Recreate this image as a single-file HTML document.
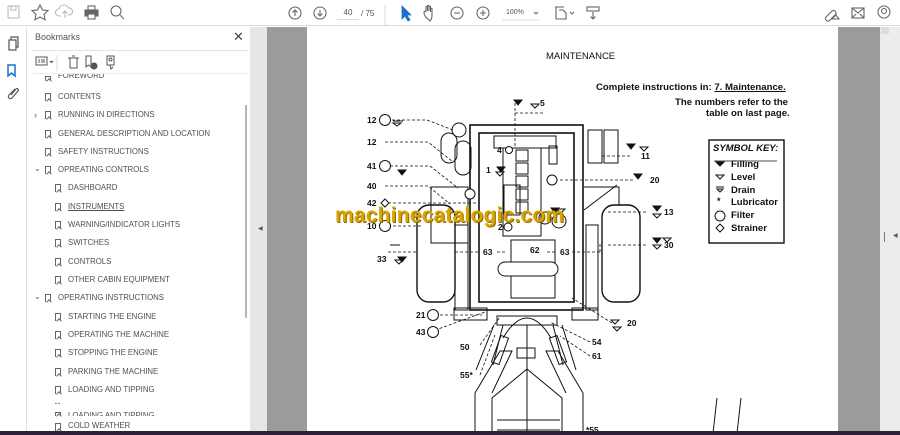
<!DOCTYPE html>
<html><head><meta charset="utf-8"><style>
*{margin:0;padding:0;box-sizing:border-box}
body{width:900px;height:435px;overflow:hidden;background:#fff;font-family:"Liberation Sans",Arial,sans-serif;position:relative}
.abs{position:absolute}
.tb{left:0;top:0;width:900px;height:26px;background:#fff;border-bottom:1px solid #dcdcdc}
.rail{left:0;top:27px;width:27px;height:408px;background:#fff;border-right:1px solid #e0e0e0}
.panel{left:27px;top:27px;width:223px;height:408px;background:#fff}
.bm{position:absolute;font-size:7.8px;color:#505050;white-space:nowrap}
.bi{position:absolute;width:6px;height:8px;border:1px solid #666;border-bottom:none}
.bi:after{content:"";position:absolute;left:0.5px;bottom:-2px;width:3px;height:3px;border-left:1px solid #666;border-top:1px solid #666;transform:rotate(45deg);background:#fff}
.gray{left:250px;top:27px;width:650px;height:405px;background:#e6e6e6}
.pg{left:267px;top:27px;width:613px;height:405px;background:#9b9b9b}
.wh{left:307px;top:27px;width:531px;height:405px;background:#fff}
.bot{left:0;top:431px;width:900px;height:4px;background:#2e1f3a}
.pt{position:absolute;font-size:10px;color:#111;font-family:"Liberation Sans",sans-serif}
.n{font-size:8.5px;font-weight:bold}
</style></head><body>
<div class="abs tb"></div>
<svg class="abs" style="left:0;top:0" width="900" height="26" fill="none" stroke="#666" stroke-width="1.1">
<rect x="8" y="6" width="11" height="12" stroke="#bbb"/><rect x="11" y="6" width="5" height="4" stroke="#bbb"/>
<path d="M40 5l2.5 5 5.5.6-4 3.7 1 5.4-5-2.7-5 2.7 1-5.4-4-3.7 5.5-.6z"/>
<path d="M61 16h-2a3.5 3.5 0 0 1 0-7 5 5 0 0 1 9.5-1 3.5 3.5 0 0 1 1 7h-2M65 18v-7m-2.5 2.5L65 11l2.5 2.5" stroke="#bbb"/>
<rect x="85" y="10" width="13" height="6" fill="#666"/><rect x="88" y="6" width="7" height="4"/><rect x="88" y="14" width="7" height="5" fill="#fff"/>
<circle cx="116" cy="11" r="5"/><path d="M120 15l4 4"/>
<circle cx="295" cy="13" r="6"/><path d="M295 16v-6m-2.5 2.5L295 10l2.5 2.5"/>
<circle cx="320" cy="13" r="6"/><path d="M320 10v6m-2.5-2.5L320 16l2.5-2.5"/>
<path d="M385 5v20" stroke="#ddd"/>
<path d="M402 6l0 13 3-3 3 5 2-1-3-5h4z" fill="#1a73c9" stroke="#1a73c9" stroke-width=".8"/>
<path d="M428 19c-3-2-4-5-4-7 0-1 1.5-1 2 0V7c0-1 1.5-1 1.5 0v4-5c0-1 1.5-1 1.5 0v5-4c0-1 1.5-1 1.5 0v5-3c0-1 1.5-1 1.5 0v6c0 3-1 5-2 6z"/>
<circle cx="457" cy="13" r="6"/><path d="M454 13h6"/>
<circle cx="483" cy="13" r="6"/><path d="M480 13h6M483 10v6"/>
<path d="M502 20h38" stroke="#ddd"/><path d="M534 12l2 2 2-2" stroke-width="1"/>
<path d="M556 7v12h10v-6l-3-3h-4M555 7h9" /><path d="M570 12l2 2 2-2" stroke-width="1"/>
<rect x="587" y="7" width="12" height="4"/><path d="M593 12v7m-2.5-2.5L593 19l2.5-2.5"/>
<path d="M826 17l6-6a2.5 2.5 0 0 1 3.5 3.5l-6 6a2.5 2.5 0 0 1-3.5-3.5zM832 19l4-4 3 4z"/>
<rect x="852" y="8" width="12" height="10"/><path d="M852 8l6 5 6-5M852 18l4-4M864 18l-4-4"/>
<circle cx="884" cy="12" r="6"/><circle cx="884" cy="11" r="2.5"/>
</svg>
<div class="abs" style="left:337px;top:5px;width:22px;height:15px;font-size:8px;color:#555;text-align:center;line-height:15px;border-bottom:1px solid #ddd">40</div>
<div class="abs" style="left:361px;top:9px;font-size:8px;color:#555">/ 75</div>
<div class="abs" style="left:506px;top:9px;font-size:7px;color:#555">100%</div>
<div class="abs rail"></div>
<svg class="abs" style="left:0;top:27px" width="27" height="80" fill="none" stroke="#555" stroke-width="1.2">
<rect x="9" y="13" width="7" height="10"/><path d="M11 13v-3h7v10h-2"/>
<path d="M8 38h7v11l-3.5-3-3.5 3z" stroke="#1a73c9" stroke-width="1.5"/>
<path d="M15 62l-6 6a2 2 0 0 0 3 3l6-7a1.3 1.3 0 0 0-2-2l-5 6" />
</svg>
<div class="abs panel"></div>
<div class="abs" style="left:35px;top:32px;font-size:9px;color:#555">Bookmarks</div>
<div class="abs" style="left:233px;top:29px;font-size:13px;color:#444">✕</div>
<div class="abs" style="left:32px;top:50px;width:216px;height:1px;background:#e3e3e3"></div>
<svg class="abs" style="left:30px;top:52px" width="100" height="20" fill="none" stroke="#555" stroke-width="1">
<rect x="6" y="5" width="11" height="8"/><path d="M8 8h2M11 8h4M8 10h2M11 10h4"/><path d="M20 9l1.5 1.5L23 9" fill="#555"/>
<path d="M27 3v16" stroke="#ddd"/>
<rect x="40" y="6" width="7" height="10"/><path d="M38 6h11M42 4h3"/>
<path d="M56 4h5v11l-2.5-2-2.5 2z"/><circle cx="64" cy="14" r="3" fill="#555"/>
<path d="M77 4h7v9h-7zM80 13l1 4 2-2"/><circle cx="80.5" cy="7.5" r="1.5"/>
</svg>
<div class="abs" style="left:32px;top:73px;width:216px;height:1px;background:#eee"></div>
<div class="abs" style="left:245px;top:105px;width:2px;height:213px;background:#b5b5b5"></div>
<div class="abs" style="left:250px;top:27px;width:1px;height:405px;background:#ddd"></div>

<div class="bm" style="left:58px;top:74px;height:7px;overflow:hidden;line-height:3px">FOREWORD</div>
<div class="bi" style="left:45px;top:76px;height:5px"></div>
<div class="bi" style="left:45px;top:93px"></div><div class="bm" style="left:58px;top:92px">CONTENTS</div>
<div class="bm" style="left:34px;top:110px;font-size:9px">›</div>
<div class="bi" style="left:45px;top:111px"></div><div class="bm" style="left:58px;top:110px">RUNNING IN DIRECTIONS</div>
<div class="bi" style="left:45px;top:130px"></div><div class="bm" style="left:58px;top:129px">GENERAL DESCRIPTION AND LOCATION</div>
<div class="bi" style="left:45px;top:148px"></div><div class="bm" style="left:58px;top:147px">SAFETY INSTRUCTIONS</div>
<div class="bm" style="left:34px;top:164px;font-size:8px">⌄</div>
<div class="bi" style="left:45px;top:166px"></div><div class="bm" style="left:58px;top:165px">OPREATING CONTROLS</div>
<div class="bi" style="left:55px;top:184px"></div><div class="bm" style="left:68px;top:183px">DASHBOARD</div>
<div class="bi" style="left:55px;top:203px"></div><div class="bm" style="left:68px;top:202px;text-decoration:underline">INSTRUMENTS</div>
<div class="bi" style="left:55px;top:221px"></div><div class="bm" style="left:68px;top:220px">WARNING/INDICATOR LIGHTS</div>
<div class="bi" style="left:55px;top:239px"></div><div class="bm" style="left:68px;top:238px">SWITCHES</div>
<div class="bi" style="left:55px;top:258px"></div><div class="bm" style="left:68px;top:257px">CONTROLS</div>
<div class="bi" style="left:55px;top:276px"></div><div class="bm" style="left:68px;top:275px">OTHER CABIN EQUIPMENT</div>
<div class="bm" style="left:34px;top:292px;font-size:8px">⌄</div>
<div class="bi" style="left:45px;top:294px"></div><div class="bm" style="left:58px;top:293px">OPERATING INSTRUCTIONS</div>
<div class="bi" style="left:55px;top:313px"></div><div class="bm" style="left:68px;top:312px">STARTING THE ENGINE</div>
<div class="bi" style="left:55px;top:331px"></div><div class="bm" style="left:68px;top:330px">OPERATING THE MACHINE</div>
<div class="bi" style="left:55px;top:349px"></div><div class="bm" style="left:68px;top:348px">STOPPING THE ENGINE</div>
<div class="bi" style="left:55px;top:368px"></div><div class="bm" style="left:68px;top:367px">PARKING THE MACHINE</div>
<div class="bi" style="left:55px;top:386px"></div><div class="bm" style="left:68px;top:385px">LOADING AND TIPPING</div>
<div class="bm" style="left:55px;top:401px;font-size:5px">▪ ▪</div>
<div class="bm" style="left:68px;top:411px;height:5px;overflow:hidden;line-height:10px">LOADING AND TIPPING</div>
<div class="bi" style="left:55px;top:412px;height:4px"></div>
<div class="bi" style="left:55px;top:423px"></div><div class="bm" style="left:68px;top:421px">COLD WEATHER</div>

<div class="abs gray"></div>
<div class="abs" style="left:258px;top:225px;font-size:6px;color:#555">◀</div>
<div class="abs pg"></div>
<div class="abs wh"></div>
<div class="abs" style="left:880px;top:27px;width:20px;height:405px;background:#ececec"></div>
<div class="abs" style="left:884px;top:232px;width:1px;height:10px;background:#777"></div>
<div class="abs" style="left:893px;top:232px;font-size:6px;color:#555">◀</div>
<div class="abs" style="left:881px;top:27px;width:8px;height:7px;background:#ddd"></div>

<div class="pt" style="left:546px;top:51px;font-size:9.5px">MAINTENANCE</div>
<div class="pt" style="left:596px;top:82px;font-size:9.6px;font-weight:bold">Complete instructions in: <span style="text-decoration:underline">7. Maintenance.</span></div>
<div class="pt" style="left:675px;top:97px;font-size:9.6px;font-weight:bold">The numbers refer to the</div>
<div class="pt" style="left:706px;top:108px;font-size:9.6px;font-weight:bold">table on last page.</div>

<svg class="abs" style="left:0;top:0" width="900" height="435" fill="none" stroke="#111" stroke-width="1">
<g stroke-width="1.6">
<rect x="470" y="125" width="113" height="185"/>
<rect x="479" y="133" width="95" height="169"/>
</g>
<rect x="417" y="205" width="38" height="97" rx="12" stroke-width="1.4"/>
<rect x="602" y="205" width="38" height="97" rx="12" stroke-width="1.4"/>
<rect x="431" y="187" width="37" height="56"/>
<rect x="455" y="225" width="13" height="85"/>
<rect x="586" y="225" width="12" height="85"/>
<path d="M584 187h35v18M584 210l33-25"/>
<rect x="454" y="308" width="33" height="12"/><rect x="572" y="308" width="26" height="12"/>
<rect x="497" y="316" width="60" height="9"/>
<rect x="588" y="130" width="14" height="33"/><rect x="604" y="130" width="14" height="33"/>
<rect x="441" y="133" width="16" height="30" rx="8"/><rect x="455" y="141" width="16" height="34" rx="8"/>
<circle cx="459" cy="130" r="7"/>
<rect x="494" y="136" width="62" height="12"/><rect x="549" y="146" width="8" height="18"/>
<rect x="503" y="148" width="38" height="88"/>
<rect x="516" y="150" width="12" height="11"/><rect x="516" y="163" width="12" height="11"/><rect x="516" y="176" width="12" height="11"/><rect x="516" y="189" width="12" height="11"/><rect x="516" y="202" width="12" height="11"/>
<rect x="504" y="185" width="16" height="30"/>
<rect x="511" y="240" width="44" height="58"/>
<rect x="498" y="262" width="60" height="14" rx="7" fill="#fff"/>
<circle cx="559" cy="221" r="7"/><circle cx="545" cy="218" r="6"/>
<path d="M475 435V393l25-42h12l-20 42M583 435V393l-25-42h-12l20 42M492 435V398l35-29 35 29v37M497 430h63M497 420h63M527 325v110"/>
<path d="M494 325l-18 45M503 325l-10 40M562 325l14 45M553 325l10 40"/>
<rect x="496" y="336" width="8" height="28" transform="rotate(20 500 350)"/>
<rect x="554" y="336" width="8" height="28" transform="rotate(-20 558 350)"/>
<rect x="517" y="348" width="18" height="10"/>
<path d="M527 318c-10 0-18 10-24 20M527 318c10 0 18 10 24 20"/>
<g stroke-dasharray="3 2" stroke-width=".8">
<path d="M387 120h40l26 10M385 142h43l25 20M385 166h45l28 22M385 186h43l22 18M383 203h95M383 226h40M388 252h30M430 315h52M430 332l55-20M480 345l20-28M480 375l15-40M590 342l-40-20M590 356l-30-20M612 323l-40-25M646 245h-40M646 212h-40M633 180h-75M630 156h-30M515 103v45M515 113h30M455 252h25M497 252h10M547 252h10M572 252h30M600 252v-10"/>
</g>
<g fill="#fff">
<circle cx="385" cy="120" r="5.5"/><circle cx="385" cy="166" r="5.5"/><circle cx="385" cy="226" r="5.5"/>
<circle cx="433" cy="315" r="5.5"/><circle cx="433" cy="332" r="5.5"/><circle cx="470" cy="194" r="5"/><circle cx="509" cy="150" r="3.5"/><circle cx="508" cy="227" r="4"/><circle cx="552" cy="180" r="5"/>
<path d="M385 199l4 4-4 4-4-4z"/>
</g>
<g fill="#111">
<path d="M514 100h8l-4 5zM398 170h8l-4 5zM398 257h8l-4 5zM627 144h8l-4 5zM634 174h8l-4 5zM653 206h8l-4 5zM653 238h8l-4 5zM497 167h8l-4 5zM551 208h8l-4 5z"/>
</g>
<g>
<path d="M531 104h8l-4 4zM393 121h10M393 123h8l-4 3zM395 260h8l-4 4zM640 147h8l-4 4zM653 214h8l-4 4zM663 238h8l-4 4zM653 245h8l-4 4zM611 320h8l-4 4zM613 327h8l-4 4zM496 172h8l-4 4zM557 209h8l-4 4zM390 245h10"/>
</g>
<path d="M717 398l-4 35M741 398l-4 35"/>
<path d="M606 432h120" stroke-dasharray="2 2"/>
<rect x="709" y="140" width="75" height="103" stroke-width="1.4"/>
<path d="M714 161h63" stroke-width=".8"/>
<path d="M716 162h8l-4 4z" fill="#111"/>
<path d="M716 175h8l-4 4z"/>
<path d="M716 187h8M717 189h6l-3 3z"/>
<circle cx="720" cy="216" r="5"/>
<path d="M720 224l4 4-4 4-4-4z"/>
</svg>
<div class="pt" style="left:713px;top:143px;font-size:9.5px;font-weight:bold;font-style:italic">SYMBOL KEY:</div>
<div class="pt" style="left:731px;top:159px;font-size:9.5px;font-weight:bold;line-height:12.8px">Filling<br>Level<br>Drain<br>Lubricator<br>Filter<br>Strainer</div>
<div class="pt" style="left:717px;top:196px;font-size:9px;font-weight:bold">*</div>
<div class="pt n" style="left:367px;top:115px">12</div>
<div class="pt n" style="left:367px;top:137px">12</div>
<div class="pt n" style="left:367px;top:161px">41</div>
<div class="pt n" style="left:367px;top:181px">40</div>
<div class="pt n" style="left:367px;top:198px">42</div>
<div class="pt n" style="left:367px;top:221px">10</div>
<div class="pt n" style="left:377px;top:254px">33</div>
<div class="pt n" style="left:416px;top:310px">21</div>
<div class="pt n" style="left:416px;top:327px">43</div>
<div class="pt n" style="left:460px;top:342px">50</div>
<div class="pt n" style="left:460px;top:370px">55*</div>
<div class="pt n" style="left:592px;top:337px">54</div>
<div class="pt n" style="left:592px;top:351px">61</div>
<div class="pt n" style="left:627px;top:318px">20</div>
<div class="pt n" style="left:664px;top:240px">30</div>
<div class="pt n" style="left:664px;top:207px">13</div>
<div class="pt n" style="left:650px;top:175px">20</div>
<div class="pt n" style="left:641px;top:151px">11</div>
<div class="pt n" style="left:540px;top:98px">5</div>
<div class="pt n" style="left:497px;top:145px">4</div>
<div class="pt n" style="left:486px;top:165px">1</div>
<div class="pt n" style="left:498px;top:222px">2</div>
<div class="pt n" style="left:483px;top:247px">63</div>
<div class="pt n" style="left:530px;top:245px">62</div>
<div class="pt n" style="left:560px;top:247px">63</div>
<div class="pt n" style="left:586px;top:425px">*55</div>
<div class="abs" style="left:335px;top:204px;font-size:21px;font-weight:bold;color:#d9a400;text-shadow:1px 1px 0 #8a6a00;letter-spacing:0.2px;font-family:'Liberation Sans',sans-serif">machinecatalogic.com</div>
<div class="abs bot"></div>
</body></html>
